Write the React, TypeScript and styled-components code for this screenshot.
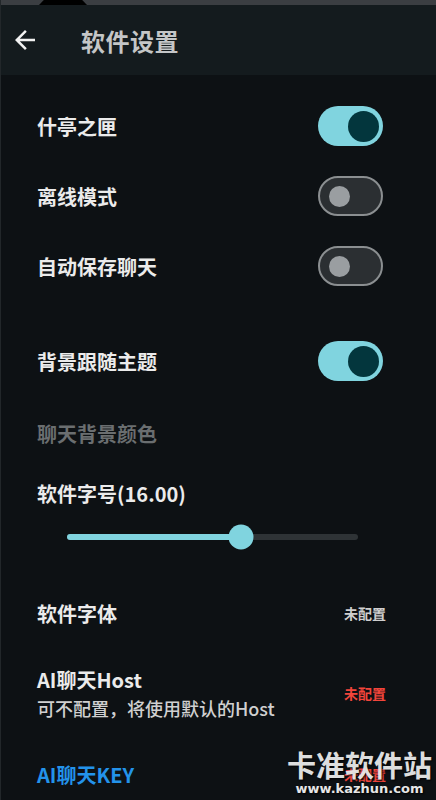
import React from 'react';
import styled, { createGlobalStyle } from 'styled-components';

const GlobalStyle = createGlobalStyle`
    html, body {
        margin: 0;
        padding: 0;
        background: #0d1114;
    }
    body {
        font-family: 'Noto Sans CJK SC', 'Noto Sans', sans-serif;
    }
`;

const BackArrow = () => (
    <svg width="30" height="30" viewBox="0 0 24 24" fill="#f2f2f2">
        <path d="M20 11H7.83l5.59-5.59L12 4l-8 8 8 8 1.41-1.41L7.83 13H20v-2z" />
    </svg>
);

const Toggle = ({ on }: { on: boolean }) => (
    <Track $on={on}>
        <Thumb $on={on} />
    </Track>
);

const SETTINGS = [
    { label: '什亭之匣', on: true },
    { label: '离线模式', on: false },
    { label: '自动保存聊天', on: false }
];

const fontSize = 16;
const sliderValue = 0.598;

const App = () => {
    return (
        <>
            <GlobalStyle />
            <Screen>
                <StatusStrip>
                    <Notch />
                </StatusStrip>
                <AppBar>
                    <IconButton>
                        <BackArrow />
                    </IconButton>
                    <Title>软件设置</Title>
                </AppBar>
                <Body>
                    {SETTINGS.map((item) => (
                        <Row key={item.label} $h={70}>
                            <Label>{item.label}</Label>
                            <Toggle on={item.on} />
                        </Row>
                    ))}
                    <Row $h={70} $top={25}>
                        <Label>背景跟随主题</Label>
                        <Toggle on={true} />
                    </Row>
                    <Row $h={74}>
                        <Label $muted>聊天背景颜色</Label>
                    </Row>
                    <Row $h={46}>
                        <Label>软件字号({fontSize.toFixed(2)})</Label>
                    </Row>
                    <SliderRow>
                        <SliderTrack>
                            <SliderFill style={{ width: `${sliderValue * 100}%` }} />
                            <SliderThumb style={{ left: `${sliderValue * 100}%` }} />
                        </SliderTrack>
                    </SliderRow>
                    <Row $h={110}>
                        <Label>软件字体</Label>
                        <Value>未配置</Value>
                    </Row>
                    <Row $h={50}>
                        <Stack>
                            <Label>AI聊天Host</Label>
                            <SubLabel>可不配置，将使用默认的Host</SubLabel>
                        </Stack>
                        <Value $warn>未配置</Value>
                    </Row>
                    <Row $h={112}>
                        <Label $accent>AI聊天KEY</Label>
                        <Value $warn>未配置</Value>
                    </Row>
                </Body>
                <Watermark>
                    <WatermarkTitle>卡准软件站</WatermarkTitle>
                    <WatermarkUrl>www.kazhun.com</WatermarkUrl>
                </Watermark>
            </Screen>
        </>
    );
};

export default App;

const Screen = styled.div`
    position: relative;
    width: 436px;
    height: 800px;
    overflow: hidden;
    background: #0d1114;
    border-left: 1px solid #22272a;
    box-sizing: border-box;
`;

const StatusStrip = styled.div`
    height: 5px;
    background: #3b3e42;
    display: flex;
    padding-left: 38px;
`;

const Notch = styled.div`
    width: 48px;
    height: 5px;
    background: #000;
    clip-path: polygon(0 100%, 10% 0, 90% 0, 100% 100%);
`;

const AppBar = styled.header`
    height: 70px;
    background: #141b1e;
    display: flex;
    align-items: center;
    padding-left: 9px;
`;

const IconButton = styled.div`
    width: 30px;
    height: 30px;
    display: flex;
`;

const Title = styled.h1`
    margin: 0 0 0 41px;
    font-size: 24px;
    font-weight: 600;
    color: #c4c6c7;
    letter-spacing: 0.5px;
`;

const Body = styled.main`
    display: flex;
    flex-direction: column;
    padding: 16px 53px 0 36px;
`;

const Row = styled.div<{ $h: number; $top?: number }>`
    height: ${({ $h }) => $h}px;
    margin-top: ${({ $top }) => $top ?? 0}px;
    display: flex;
    align-items: center;
    justify-content: space-between;
    flex-shrink: 0;
`;

const Label = styled.span<{ $muted?: boolean; $accent?: boolean }>`
    font-size: 20px;
    font-weight: 600;
    color: ${({ $muted, $accent }) =>
        $muted ? '#6a6e70' : $accent ? '#2393ea' : '#ebebeb'};
`;

const Stack = styled.div`
    display: flex;
    flex-direction: column;
    gap: 1px;
`;

const SubLabel = styled.span`
    font-size: 18px;
    font-weight: 500;
    color: #d0d0d0;
`;

const Value = styled.span<{ $warn?: boolean }>`
    font-size: 14px;
    font-weight: 600;
    margin-right: -3px;
    color: ${({ $warn }) => ($warn ? '#f2453b' : '#cfcfcf')};
`;

const Track = styled.div<{ $on: boolean }>`
    width: 65px;
    height: 40px;
    box-sizing: border-box;
    border-radius: 20px;
    display: flex;
    align-items: center;
    padding: 0 ${({ $on }) => ($on ? '4px' : '0')} 0 ${({ $on }) => ($on ? '0' : '9px')};
    justify-content: ${({ $on }) => ($on ? 'flex-end' : 'flex-start')};
    background: ${({ $on }) => ($on ? '#80d4df' : '#2b2f32')};
    border: ${({ $on }) => ($on ? 'none' : '2px solid #8b8f91')};
`;

const Thumb = styled.div<{ $on: boolean }>`
    width: ${({ $on }) => ($on ? 31 : 21)}px;
    height: ${({ $on }) => ($on ? 31 : 21)}px;
    border-radius: 50%;
    background: ${({ $on }) => ($on ? '#03363d' : '#9a9ea1')};
`;

const SliderRow = styled.div`
    height: 42px;
    display: flex;
    align-items: center;
    padding: 0 25px 0 30px;
    flex-shrink: 0;
`;

const SliderTrack = styled.div`
    position: relative;
    flex: 1;
    height: 6px;
    border-radius: 3px;
    background: #2e3336;
`;

const SliderFill = styled.div`
    height: 100%;
    border-radius: 3px;
    background: #80d4df;
`;

const SliderThumb = styled.div`
    position: absolute;
    top: 50%;
    width: 25px;
    height: 25px;
    border-radius: 50%;
    background: #80d4df;
    transform: translate(-50%, -50%);
`;

const Watermark = styled.div`
    position: absolute;
    right: 4px;
    bottom: 3px;
    display: flex;
    flex-direction: column;
    align-items: center;
    pointer-events: none;
`;

const WatermarkTitle = styled.span`
    font-size: 29px;
    font-weight: 700;
    line-height: 34px;
    color: #e9e9e9;
    text-shadow: 1px 1px 2px #000;
    opacity: 0.95;
`;

const WatermarkUrl = styled.span`
    font-family: 'DejaVu Sans', sans-serif;
    font-size: 13px;
    font-weight: 700;
    line-height: 16px;
    color: #e6e6e6;
    text-shadow: 1px 1px 2px #000;
`;
